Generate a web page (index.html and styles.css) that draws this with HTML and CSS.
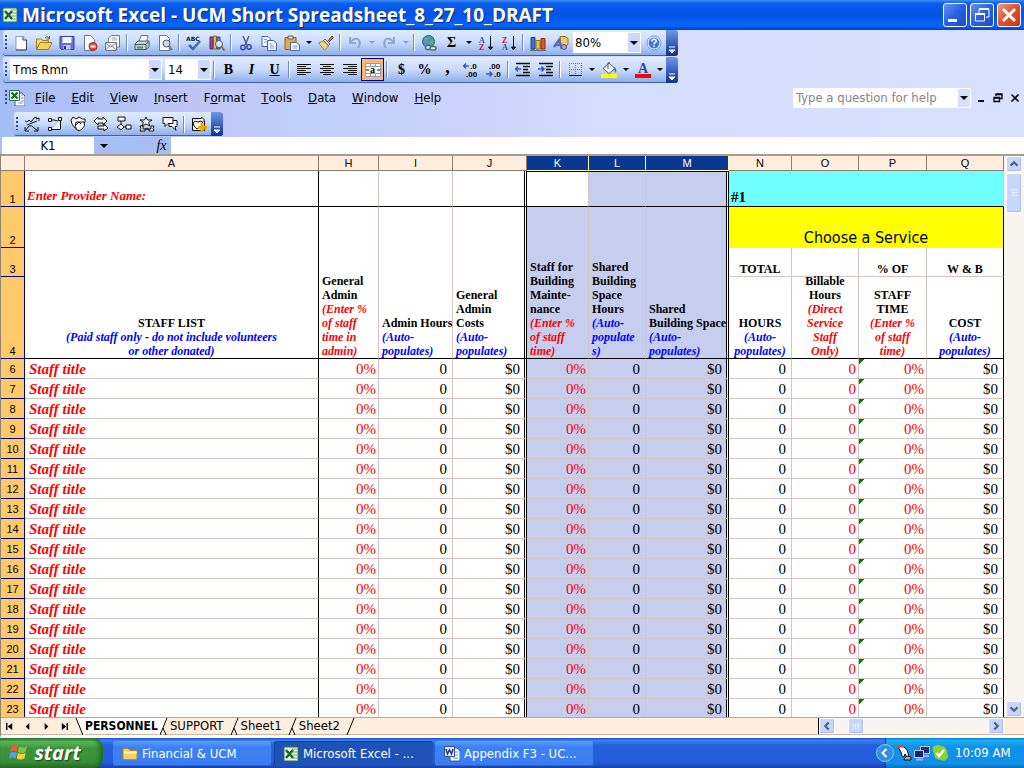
FILE: index.html
```html
<!DOCTYPE html>
<html lang="en">
<head>
<meta charset="utf-8">
<title>Microsoft Excel - UCM Short Spreadsheet_8_27_10_DRAFT</title>
<link rel="stylesheet" href="styles.css">
</head>
<body>
<svg class="defs" aria-hidden="true">
  <symbol id="i-xl" viewBox="0 0 16 16"><path d="M1 1h14v14H1z" fill="#e9f5e4" stroke="#2c7a35"/><path d="M9 3h5M9 6h5M9 9h5M9 12h5" stroke="#76a878"/><path d="M3 4l7 8M10 4l-7 8" stroke="#176b28" stroke-width="2.6"/></symbol>
  <symbol id="i-book" viewBox="0 0 16 16"><path d="M6 3h7l3 3v10H6z" fill="#fff" stroke="#44618f"/><path d="M12 5h3M12 8h3M12 11h3M9 13h5" stroke="#7d95c4"/><path d="M.5.5h10v10H.5z" fill="#e9f5e4" stroke="#2c7a35"/><path d="M2.500 2.500l6 6M8.500 2.500l-6 6" stroke="#176b28" stroke-width="2"/></symbol>
  <symbol id="i-word" viewBox="0 0 16 16"><path d="M6 2h7l3 3v10H6z" fill="#fff" stroke="#3c568c"/><path d="M11 6h3M11 9h3M9 12h5" stroke="#6c86c0"/><path d="M.5.5h10v10H.5z" fill="#e4ecfb" stroke="#2d4f9e"/><path d="M2 3l1.500 5L5.500 4l2 4L9 3" fill="none" stroke="#1c3c94" stroke-width="1.500"/></symbol>
  <symbol id="i-folder" viewBox="0 0 16 16"><path d="M1 3.500q0-1 1-1h4l2 2h6q1 0 1 1V12q0 1.500-1.500 1.500h-11Q1 13.500 1 12z" fill="#f6d063" stroke="#b98b1c"/><path d="M2 6.500h12.500" stroke="#fff3b8" stroke-width="2"/></symbol>
  <symbol id="i-mag" viewBox="0 0 16 16"><path d="M2.500.5h7l3 3v12h-10z" fill="#fff" stroke="#5f77a8"/><circle cx="9.500" cy="8.500" r="3.500" fill="#c7dcf4" stroke="#3b5a86"/><path d="M12 11l3 4" stroke="#a4622a" stroke-width="2"/></symbol>
</svg>

<header class="titlebar">
  <svg class="ic"><use href="#i-xl"/></svg>
  <h1>Microsoft Excel - UCM Short Spreadsheet_8_27_10_DRAFT</h1>
  <div class="win-buttons">
    <button aria-label="Minimize"><svg viewBox="0 0 22 22"><path d="M4 15h9v3H4z" fill="#fff"/></svg></button>
    <button aria-label="Restore"><svg viewBox="0 0 22 22"><path d="M8 9V5.500h10V13h-3" fill="none" stroke="#fff"/><path d="M8 5h10" stroke="#fff" stroke-width="2"/><path d="M4.500 9.500h9V17h-9z" fill="none" stroke="#fff"/><path d="M4 10h10" stroke="#fff" stroke-width="2"/></svg></button>
    <button class="close" aria-label="Close"><svg viewBox="0 0 22 22"><path d="M5 5l12 12M17 5L5 17" stroke="#fff" stroke-width="3"/></svg></button>
  </div>
</header>

<div class="chrome">
  <div class="toolbar" role="toolbar" aria-label="Standard">
    <span class="grip"></span>
    <button aria-label="New"><svg class="ic" viewBox="0 0 16 16"><path d="M3 1.500h7l3.500 3.500v10H3z" fill="#fff" stroke="#8a9cc4"/><path d="M10 1.500V5h3.500M13.500 5v10H3" fill="none" stroke="#33415f"/></svg></button>
    <button aria-label="Open"><svg class="ic" viewBox="0 0 16 16"><path d="M.5 14V4h5l1 1.500h6V8" fill="#f5d77d" stroke="#a37a1e"/><path d="M.5 14.500L4 7.500h12l-3.500 7z" fill="#fbcf5c" stroke="#a37a1e"/><path d="M9 3q2-3 4 0M13.500 1v3h-3" fill="none" stroke="#3a61a8"/></svg></button>
    <button aria-label="Save"><svg class="ic" viewBox="0 0 16 16"><path d="M1 1.500h14v13H2.500L1 13z" fill="#6a6fd0" stroke="#3c429c"/><path d="M3.500 2h9v6h-9z" fill="#f4f7ff"/><path d="M4.500 10h7v4.500h-7z" fill="#c6cce8"/><path d="M6 11v3" stroke="#2b3380" stroke-width="2"/></svg></button>
    <button aria-label="Permission"><svg class="ic" viewBox="0 0 16 16"><path d="M2.500.5h6l4 4v11h-10z" fill="#fff" stroke="#5f77a8"/><circle cx="11" cy="11.500" r="4" fill="#e2502e" stroke="#a32b13"/><path d="M8.500 11.500h5" stroke="#fff" stroke-width="2"/></svg></button>
    <button aria-label="E-mail"><svg class="ic" viewBox="0 0 16 16"><path d="M3.500 8V3l3-2.500h8V12h-3" fill="#fff" stroke="#6f7687"/><path d="M7 3h5M7 5h5" stroke="#9a9fac"/><path d="M.5 7.500h11v8H.5z" fill="#f3f3f5" stroke="#69707f"/><path d="M.5 15l5-5 6 5M.5 8l5 4 6-4" fill="none" stroke="#8a8f9c"/></svg></button>
    <span class="sep"></span>
    <button aria-label="Print"><svg class="ic" viewBox="0 0 16 16"><path d="M5 7l2-6.500h7L12.500 7" fill="#fff" stroke="#65758f"/><path d="M1 9l3-3h11v6l-3 2.500H1z" fill="#c3ccd8" stroke="#4d5b70"/><path d="M1 9.500h11L15 6M12 9.500v5" fill="none" stroke="#4d5b70"/><path d="M3 12.500h6" stroke="#2daa38" stroke-width="2"/></svg></button>
    <button aria-label="Print Preview"><svg class="ic"><use href="#i-mag"/></svg></button>
    <span class="sep"></span>
    <button aria-label="Spelling"><svg class="ic" viewBox="0 0 16 16"><text x="0" y="6" class="abc">ABC</text><path d="M3 10l4 4 7-8" fill="none" stroke="#3769c6" stroke-width="2.500"/></svg></button>
    <button aria-label="Research"><svg class="ic" viewBox="0 0 16 16"><path d="M1 2h3v12H1z" fill="#a23fa5" stroke="#5a2360"/><path d="M4.500 1h3v13h-3z" fill="#e6bf48" stroke="#8b6a18"/><path d="M8 2h3v12H8z" fill="#5a86d3" stroke="#2d4d8b"/><circle cx="10" cy="9" r="3.500" fill="#dcebfa" stroke="#3b5a86"/><path d="M12.500 11.500l3 4" stroke="#a4622a" stroke-width="2"/></svg></button>
    <span class="sep"></span>
    <button aria-label="Cut"><svg class="ic" viewBox="0 0 16 16"><path d="M5 1l4 9M11 1L7 10" stroke="#4c5f86" stroke-width="1.500"/><circle cx="5" cy="12.500" r="2.200" fill="none" stroke="#2a54b4" stroke-width="1.500"/><circle cx="11" cy="12" r="2.200" fill="none" stroke="#2a54b4" stroke-width="1.500"/></svg></button>
    <button aria-label="Copy"><svg class="ic" viewBox="0 0 16 16"><path d="M1 1.500h6l2.500 2.500v7.500H1z" fill="#fff" stroke="#3f65b5"/><path d="M6.500 5.500h6L15.500 8v7.500h-9z" fill="#fff" stroke="#3f65b5"/><path d="M3 4.500h3M3 7h3M8.500 9h3M8.500 11h5M8.500 13h5" stroke="#7696d8"/></svg></button>
    <button aria-label="Paste"><svg class="ic" viewBox="0 0 16 16"><path d="M1 2.500h11v12H1z" fill="#e9a93e" stroke="#946114"/><path d="M4 1h5v3H4z" fill="#d9dde6" stroke="#5b6575"/><path d="M6.500 7.500h6l3 2.500v5.500h-9z" fill="#fff" stroke="#3f65b5"/><path d="M8.500 11h5M8.500 13h5" stroke="#7696d8"/></svg></button>
    <button class="drop" aria-label="Paste options"></button>
    <button aria-label="Format Painter"><svg class="ic" viewBox="0 0 16 16"><path d="M10 6l4-5 1.500 1.500L11 7" fill="#c98544" stroke="#744514"/><path d="M7 4l5 5-1.500 1.500L5.500 5.500z" fill="#d2d8e6" stroke="#5a6680"/><path d="M5.500 6l5 5-4 4-6-7z" fill="#f9d575" stroke="#a8822a"/></svg></button>
    <span class="sep"></span>
    <button aria-label="Undo" disabled><svg class="ic" viewBox="0 0 16 16"><path d="M3 2v6h6M3.500 7.500q3-5 7-3.500t1 9" fill="none" stroke="#93a8d0" stroke-width="2"/></svg></button>
    <button class="drop dim" aria-label="Undo history"></button>
    <button aria-label="Redo" disabled><svg class="ic" viewBox="0 0 16 16"><path d="M13 2v6H7M12.500 7.500q-3-5-7-3.500t-1 9" fill="none" stroke="#93a8d0" stroke-width="2"/></svg></button>
    <button class="drop dim" aria-label="Redo history"></button>
    <span class="sep"></span>
    <button aria-label="Insert Hyperlink"><svg class="ic" viewBox="0 0 16 16"><circle cx="7.500" cy="6.500" r="6" fill="#4b8fe0" stroke="#28598f"/><path d="M3 3q3-2 5 0l-1 3-3 1zM8 7l4-2 1 3-3 3z" fill="#52b84d"/><rect x="4.500" y="10.500" width="6" height="4" rx="2" fill="#e8ecf4" stroke="#56647c" stroke-width="1.500"/><rect x="9" y="11.500" width="6" height="3.500" rx="2" fill="#e8ecf4" stroke="#56647c" stroke-width="1.500"/></svg></button>
    <button class="serif" aria-label="AutoSum">Σ</button>
    <button class="drop" aria-label="AutoSum options"></button>
    <button aria-label="Sort Ascending"><svg class="ic" viewBox="0 0 16 16"><text x="1" y="8" class="sort blue">A</text><text x="1" y="15" class="sort red">Z</text><path d="M12.500 1v13M10.500 12l2 3 2-3z" stroke="#111" fill="#111"/></svg></button>
    <button aria-label="Sort Descending"><svg class="ic" viewBox="0 0 16 16"><text x="1" y="8" class="sort red">Z</text><text x="1" y="15" class="sort blue">A</text><path d="M12.500 1v13M10.500 12l2 3 2-3z" stroke="#111" fill="#111"/></svg></button>
    <span class="sep"></span>
    <button aria-label="Chart Wizard"><svg class="ic" viewBox="0 0 16 16"><path d="M1 2.500h4V14H1z" fill="#3d74d8" stroke="#1c3c86"/><path d="M6 5.500h4V14H6z" fill="#f5c33c" stroke="#97700f"/><path d="M11 3.500h4V14h-4z" fill="#e1582d" stroke="#8c2a10"/><path d="M0 15.500h16" stroke="#5a6680"/></svg></button>
    <button aria-label="Drawing"><svg class="ic" viewBox="0 0 16 16"><path d="M7 1.500h5l3 2v6l-3 2H8z" fill="#f2cc62" stroke="#8f6c1e"/><path d="M1 12L6 5l3 9M3 10h5" fill="none" stroke="#5a6cc2" stroke-width="2.500"/><circle cx="11" cy="12" r="2.500" fill="#b6a1dc" stroke="#614a90"/></svg></button>
    <span class="combo zoom-combo"><select aria-label="Zoom"><option>80%</option></select></span>
    <button aria-label="Help"><svg class="ic" viewBox="0 0 16 16"><circle cx="8" cy="8" r="7" fill="#fff" stroke="#5f8fe0"/><circle cx="8" cy="8" r="5.500" fill="#3b7be0"/><path d="M5.800 6.500q0-2.300 2.200-2.300t2.200 2q0 1-1.200 1.500T8 9.300M8 10.500v1.500" fill="none" stroke="#fff" stroke-width="1.500"/></svg></button>
    <button class="cap" aria-label="Toolbar Options"><svg viewBox="0 0 8 8"><path d="M1 1h6M1 4h6L4 7z" fill="#fff" stroke="#fff"/></svg></button>
  </div>

  <div class="toolbar" role="toolbar" aria-label="Formatting">
    <span class="grip"></span>
    <span class="combo font-combo"><select aria-label="Font"><option>Tms Rmn</option></select></span>
    <span class="combo size-combo"><select aria-label="Font Size"><option>14</option></select></span>
    <span class="sep"></span>
    <button class="serif" aria-label="Bold">B</button>
    <button class="serif italic" aria-label="Italic">I</button>
    <button class="serif under" aria-label="Underline">U</button>
    <span class="sep"></span>
    <button aria-label="Align Left"><svg class="ic" viewBox="0 0 16 16"><path d="M1 2.500h14M1 4.500h9M1 6.500h14M1 8.500h9M1 10.500h14M1 12.500h9" stroke="#111"/></svg></button>
    <button aria-label="Center"><svg class="ic" viewBox="0 0 16 16"><path d="M1 2.500h14M4 4.500h8M1 6.500h14M4 8.500h8M1 10.500h14M4 12.500h8" stroke="#111"/></svg></button>
    <button aria-label="Align Right"><svg class="ic" viewBox="0 0 16 16"><path d="M1 2.500h14M6 4.500h9M1 6.500h14M6 8.500h9M1 10.500h14M6 12.500h9" stroke="#111"/></svg></button>
    <button class="pressed" aria-label="Merge and Center"><svg class="ic" viewBox="0 0 16 16"><path d="M.5 1.500h15v13H.5zM.5 4.500h15M.5 11.500h15M5.500 1.500v3M10.500 1.500v3M5.500 11.500v3M10.500 11.500v3" fill="#fff" stroke="#8b9cc4"/><text x="5" y="11" class="merge-a">a</text><path d="M1 8h3M12 8h3" stroke="#111"/></svg></button>
    <span class="sep"></span>
    <button class="serif" aria-label="Currency Style">$</button>
    <button class="serif" aria-label="Percent Style">%</button>
    <button class="serif comma" aria-label="Comma Style">,</button>
    <button aria-label="Increase Decimal"><svg class="ic" viewBox="0 0 16 16"><path d="M0 4h6M3 1.500L.5 4 3 6.500" stroke="#2a5bc4" stroke-width="1.500" fill="none"/><text x="7" y="7" class="dec">.0</text><text x="3" y="15" class="dec">.00</text></svg></button>
    <button aria-label="Decrease Decimal"><svg class="ic" viewBox="0 0 16 16"><text x="3" y="7" class="dec">.00</text><text x="8" y="15" class="dec">.0</text><path d="M0 12h6M3.500 9.500L6 12l-2.500 2.500" stroke="#2a5bc4" stroke-width="1.500" fill="none"/></svg></button>
    <span class="sep"></span>
    <button aria-label="Decrease Indent"><svg class="ic" viewBox="0 0 16 16"><path d="M1 1.500h14M8 4.500h7M8 7.500h5M8 10.500h7M1 13.500h14" stroke="#111" stroke-width="1.400"/><path d="M0 7h6M3 4.500L.5 7 3 9.500" stroke="#2a5bc4" stroke-width="1.500" fill="none"/></svg></button>
    <button aria-label="Increase Indent"><svg class="ic" viewBox="0 0 16 16"><path d="M1 1.500h14M8 4.500h7M8 7.500h5M8 10.500h7M1 13.500h14" stroke="#111" stroke-width="1.400"/><path d="M0 7h6M3.500 4.500L6 7 3.500 9.500" stroke="#2a5bc4" stroke-width="1.500" fill="none"/></svg></button>
    <span class="sep"></span>
    <button aria-label="Borders"><svg class="ic" viewBox="0 0 16 16"><path d="M2 1.500h13M2 7.500h13M2.500 1v12M8.500 1v12M14.500 1v12" stroke="#66799f" stroke-dasharray="1 1"/><path d="M2 13.500h13" stroke="#111"/></svg></button>
    <button class="drop" aria-label="Border options"></button>
    <button aria-label="Fill Color"><svg class="ic" viewBox="0 0 16 16"><path d="M2 6.500L8 1l6 5.500-6 5z" fill="#eef2f9" stroke="#4c5e80"/><path d="M7 7V1q0-1.500 2 0" fill="none" stroke="#4c5e80"/><path d="M13 5q3 1 2 6l-2-3z" fill="#3c68c2"/><path d="M0 12h16v4H0z" fill="#ff0"/></svg></button>
    <button class="drop" aria-label="Fill Color options"></button>
    <button aria-label="Font Color"><svg class="ic" viewBox="0 0 16 16"><text x="3" y="11" class="font-a">A</text><path d="M0 12h16v4H0z" fill="red"/></svg></button>
    <button class="drop" aria-label="Font Color options"></button>
    <button class="cap" aria-label="Toolbar Options"><svg viewBox="0 0 8 8"><path d="M1 1h6M1 4h6L4 7z" fill="#fff" stroke="#fff"/></svg></button>
  </div>

  <nav class="menubar" aria-label="Menu">
    <span class="grip"></span>
    <svg class="ic"><use href="#i-book"/></svg>
    <div class="menus">
      <button><u>F</u>ile</button><button><u>E</u>dit</button><button><u>V</u>iew</button><button><u>I</u>nsert</button><button>F<u>o</u>rmat</button><button><u>T</u>ools</button><button><u>D</u>ata</button><button><u>W</u>indow</button><button><u>H</u>elp</button>
    </div>
    <span class="combo ask"><input type="text" aria-label="Type a question for help" placeholder="Type a question for help"></span>
    <div class="doc-buttons">
      <button aria-label="Minimize Window"><svg viewBox="0 0 10 10"><path d="M2 8h6" stroke="#000" stroke-width="2"/></svg></button>
      <button aria-label="Restore Window"><svg viewBox="0 0 10 10"><path d="M3 3V1h6v4.500H7M3 1.500h6M1 4.500h5.500v4H1zM1 5h6" fill="none" stroke="#000" stroke-width="1.300"/></svg></button>
      <button aria-label="Close Window"><svg viewBox="0 0 10 10"><path d="M1.500 1.500l7 7M8.500 1.500l-7 7" stroke="#000" stroke-width="1.600"/></svg></button>
    </div>
  </nav>

  <div class="toolbar flow" role="toolbar" aria-label="AutoShapes">
    <span class="grip"></span>
    <button aria-label="Lines"><svg class="ic line" viewBox="0 0 16 16"><path fill="none" d="M1 5l2 1 2-2 2 2 3-4 3-1M12 3l3-1v3M3 9l10-4M1 11v4h4M1 15l4-5q3-1 4 1l5 4M14 11v4h-4"/></svg></button>
    <button aria-label="Connectors"><svg class="ic line" viewBox="0 0 16 16"><path d="M1.500 2.500h3v3h-3zM11.500 1.500h3v3h-3zM1.500 11.500h3v3h-3zM5 4h2l4 1M13.500 5v8.500H5"/></svg></button>
    <button aria-label="Basic Shapes"><svg class="ic line" viewBox="0 0 16 16"><path d="M1 4l2-3 3 2 3-2 3 2h3v3l-3 4-4 4-3-2-3-4z"/><path d="M6 6h8q2 4-2 7-3 3-5 1-3-3-1-8zM6 9l3-3 2 2"/></svg></button>
    <button aria-label="Block Arrows"><svg class="ic line" viewBox="0 0 16 16"><path d="M1 5l4-4v2h5V1l4 4-4 4V7H5v2zM5 10h6V8l4 4-4 3v-2H5z"/></svg></button>
    <button aria-label="Flowchart"><svg class="ic line" viewBox="0 0 16 16"><path d="M2 1h7v4H2zM5 5v3M5 8l3 3-3 3-4-3zM8 11h2M10 9h5v4h-5z"/></svg></button>
    <button aria-label="Stars and Banners"><svg class="ic line" viewBox="0 0 16 16"><path d="M7 1l1.500 3H13L9.500 6.500 11 10 7 8l-4 2 1.500-3.500L1 4h4.500zM1 10h3v3h8v-3h3l-1 2.500 1 2.500h-5v-2H6v2H1l1-2.500z"/></svg></button>
    <button aria-label="Callouts"><svg class="ic line" viewBox="0 0 16 16"><path d="M7 4.500h8v6h-2l1 4-4-4H7z"/><path d="M1 1.500h10v6H6l-3 3v-3H1z"/></svg></button>
    <span class="sep"></span>
    <button aria-label="More AutoShapes"><svg class="ic line" viewBox="0 0 16 16"><path d="M1.500 2.500h9V1l3 3-3 3V5.500M1.500 2.500v12h12V5"/><path d="M2 7l2-2 3 1 3-1 2 2-3 5-3 1-3-3z"/><path d="M11 7v9M7 11.500h9" class="gold"/></svg></button>
    <button class="cap" aria-label="Toolbar Options"><svg viewBox="0 0 8 8"><path d="M1 1h6M1 4h6L4 7z" fill="#fff" stroke="#fff"/></svg></button>
  </div>
</div>

<div class="formula-bar">
  <input class="name-box" type="text" aria-label="Name Box" value="K1">
  <button class="drop" aria-label="Name list"></button>
  <button class="fx" aria-label="Insert Function">fx</button>
  <input class="formula" type="text" aria-label="Formula Bar">
</div>

<main class="workbook">
  <div class="sheet">
    <table class="grid">
      <colgroup><col class="c-head"><col><col class="c-h"><col class="c-i"><col class="c-i"><col class="c-k"><col class="c-l"><col class="c-m"><col class="c-n"><col class="c-o"><col class="c-p"><col class="c-q"></colgroup>
      <thead>
        <tr><th></th><th>A</th><th>H</th><th>I</th><th>J</th><th class="on">K</th><th class="on">L</th><th class="on">M</th><th>N</th><th>O</th><th>P</th><th>Q</th></tr>
      </thead>
      <tbody id="rows">
        <tr class="r1"><th>1</th><td class="provider edge">Enter Provider Name:</td><td></td><td></td><td class="dbl"></td><td class="active"></td><td class="sel"></td><td class="sel dbl"></td><td class="service-no" colspan="4">#1</td></tr>
        <tr class="r2"><th>2</th>
          <td rowspan="3" class="edge mid">STAFF LIST<br><i class="blue">(Paid staff only - do not include volunteers<br>or other donated)</i></td>
          <td rowspan="3">General<br>Admin<br><i class="red">(Enter %<br>of staff<br>time in<br>admin)</i></td>
          <td rowspan="3">Admin Hours<br><i class="blue">(Auto-<br>populates)</i></td>
          <td rowspan="3" class="dbl">General<br>Admin<br>Costs<br><i class="blue">(Auto-<br>populates)</i></td>
          <td rowspan="3" class="sel">Staff for<br>Building<br>Mainte-<br>nance<br><i class="red">(Enter %<br>of staff<br>time)</i></td>
          <td rowspan="3" class="sel">Shared<br>Building<br>Space<br>Hours<br><i class="blue">(Auto-<br>populate<br>s)</i></td>
          <td rowspan="3" class="sel dbl">Shared<br>Building Space<br><i class="blue">(Auto-<br>populates)</i></td>
          <td colspan="4" class="choose">Choose a Service</td></tr>
        <tr class="r3"><th>3</th><td class="mid">TOTAL</td><td></td><td class="mid">% OF</td><td class="mid last">W &amp; B</td></tr>
        <tr class="r4"><th>4</th>
          <td class="mid">HOURS<br><i class="blue">(Auto-<br>populates)</i></td>
          <td class="mid"><div class="spill">Billable<br>Hours<br><i class="red">(Direct<br>Service<br>Staff<br>Only)</i></div></td>
          <td class="mid">STAFF<br>TIME<br><i class="red">(Enter %<br>of staff<br>time)</i></td>
          <td class="mid last">COST<br><i class="blue">(Auto-<br>populates)</i></td></tr>
      </tbody>
    </table>
    <div class="scroll vertical" aria-hidden="true">
      <span class="sb"><svg viewBox="0 0 16 16"><path d="M4 10l4-4 4 4"/></svg></span>
      <span class="sb thumb-v"><svg viewBox="0 0 16 16"><path d="M5 4.500h7M5 7.500h7M5 10.500h7" class="thin"/></svg></span>
      <span class="sb end"><svg viewBox="0 0 16 16"><path d="M4 6l4 4 4-4"/></svg></span>
    </div>
  </div>
  <div class="tabs">
    <div class="tab-nav">
      <button aria-label="First sheet"><svg viewBox="0 0 10 10"><path d="M2 1v8" stroke="#000" stroke-width="1.500"/><path d="M8 1v8L3 5z"/></svg></button>
      <button aria-label="Previous sheet"><svg viewBox="0 0 10 10"><path d="M7 1v8L3 5z"/></svg></button>
      <button aria-label="Next sheet"><svg viewBox="0 0 10 10"><path d="M3 1v8l4-4z"/></svg></button>
      <button aria-label="Last sheet"><svg viewBox="0 0 10 10"><path d="M8 1v8" stroke="#000" stroke-width="1.500"/><path d="M2 1v8l5-4z"/></svg></button>
    </div>
    <svg class="slant" viewBox="0 0 10 17"><path d="M1 0l7 17h2V0z" fill="#fff"/><path d="M1 0l7 17" stroke="#000"/></svg>
    <button class="tab current">PERSONNEL</button>
    <svg class="slant" viewBox="0 0 10 17"><path d="M0 0h9L2 17H0z" fill="#fff"/><path d="M9 0L2 17M5 10l3 7" stroke="#000"/></svg>
    <button class="tab">SUPPORT</button>
    <svg class="slant" viewBox="0 0 10 17"><path d="M9 0L2 17M5 10l3 7" stroke="#000"/></svg>
    <button class="tab">Sheet1</button>
    <svg class="slant" viewBox="0 0 10 17"><path d="M9 0L2 17M5 10l3 7" stroke="#000"/></svg>
    <button class="tab">Sheet2</button>
    <svg class="slant" viewBox="0 0 10 17"><path d="M9 0L2 17" stroke="#000"/></svg>
    <div class="scroll horizontal" aria-hidden="true">
      <span class="sb"><svg viewBox="0 0 16 16"><path d="M10 4L6 8l4 4"/></svg></span>
      <span class="sb thumb-h"><svg viewBox="0 0 16 16"><path d="M4.500 5v7M7.500 5v7M10.500 5v7" class="thin"/></svg></span>
      <span class="sb end"><svg viewBox="0 0 16 16"><path d="M6 4l4 4-4 4"/></svg></span>
    </div>
  </div>
</main>

<footer class="taskbar">
  <button class="start"><svg viewBox="0 0 20 20"><path d="M3 4q3-2 6 0L8 9q-3-2-6 0z" fill="#f0592b"/><path d="M10 4q3 2 7 0l-1 5q-4 2-7 0z" fill="#7fc742"/><path d="M2 10q3-2 6 0l-1 5q-3-2-6 0z" fill="#5a9cf5"/><path d="M9 10q3 2 7 0l-1 5q-4 2-7 0z" fill="#fbcd3b"/></svg>start</button>
  <div class="tasks">
    <button><svg class="ic"><use href="#i-folder"/></svg>Financial &amp; UCM</button>
    <button class="down"><svg class="ic"><use href="#i-xl"/></svg>Microsoft Excel - ...</button>
    <button><svg class="ic"><use href="#i-word"/></svg>Appendix F3 - UC...</button>
  </div>
  <div class="tray">
    <button class="expand" aria-label="Show hidden icons"><svg viewBox="0 0 18 18"><circle cx="9" cy="9" r="8.500" fill="#2f8fe8" stroke="#8cc8fa"/><path d="M10.500 5L6.500 9l4 4" fill="none" stroke="#fff" stroke-width="2"/></svg></button>
    <svg class="ic" viewBox="0 0 16 16"><path d="M2 2l5-1 4 4 2 6-2 1-2-3-1 3-2-1-1-4z" fill="#fff" stroke="#111"/><path d="M1 2.500L6 1l2 1" stroke="#e33" stroke-width="2" fill="none"/><path d="M8 14l3-3 4 1v3H8z" fill="#aab" stroke="#111"/></svg>
    <svg class="ic" viewBox="0 0 16 16"><path d="M6.500 1.500h9v7h-9z" fill="#26306f" stroke="#b9c2e6"/><path d="M.5 5.500h9v7h-9z" fill="#1b2560" stroke="#c5cdee"/><path d="M2 14.500h7M10 11h5" stroke="#b1a6d8" stroke-width="2"/></svg>
    <svg class="ic" viewBox="0 0 16 16"><path d="M5 0q3 0 4 1 6 0 6 7 2 3 0 6-3 3-6 1-6 0-7-6Q0 5 1 2 3 0 5 0z" fill="#8fd02e"/><path d="M4.500 8l2.500 3 5-6" fill="none" stroke="#fff" stroke-width="2.500"/></svg>
    <time>10:09 AM</time>
  </div>
</footer>
<script src="rows.js"></script>
</body>
</html>
```

FILE: rows.js
```js
const body = document.getElementById('rows');
const columns = [
  ['Staff title', 'title edge'], ['0%', 'red'], ['0', ''], ['$0', 'dbl'],
  ['0%', 'red sel'], ['0', 'sel'], ['$0', 'sel dbl'],
  ['0', ''], ['0', 'red'], ['0%', 'red flag'], ['$0', 'last']
];
for (let n = 6; n <= 23; n++) {
  const row = body.insertRow();
  row.className = 'data';
  const head = document.createElement('th');
  head.textContent = n;
  row.append(head);
  for (const [text, cls] of columns) {
    const cell = row.insertCell();
    cell.textContent = text;
    cell.className = cls;
  }
}
```

FILE: styles.css
```css
* { box-sizing: border-box; }
body { margin: 0; height: 100vh; display: flex; flex-direction: column; overflow: hidden; background: #fff; color: #000; font: 13px/16px "DejaVu Sans Condensed", "DejaVu Sans", sans-serif; }
button, input, select { font: inherit; color: inherit; margin: 0; padding: 0; border: 0; background: none; border-radius: 0; }
button { display: flex; align-items: center; justify-content: center; flex: none; }
svg { flex: none; }
.defs { display: none; }
.ic { width: 16px; height: 16px; }
.red { color: #f00; fill: #b3262a; }
.blue { color: #00f; fill: #2c4fa5; }

.titlebar { display: flex; align-items: center; gap: 4px; height: 30px; flex: none; padding: 0 3px 0 2px; background: linear-gradient(#3c8cf5, #0a5ceb 12%, #0452e4 50%, #0566fb 85%, #0441c8); color: #fff; }
.titlebar h1 { flex: 1; margin: 0; font: bold 19px/26px "Open Sans", sans-serif; text-shadow: 1px 1px #0a2a86; white-space: nowrap; }
.win-buttons { display: flex; gap: 3px; }
.win-buttons button { width: 24px; height: 24px; border: 1px solid #fff; border-radius: 3px; background: linear-gradient(135deg, #6b94f0, #2a5fe0 50%, #1d4bc8); }
.win-buttons .close { background: linear-gradient(135deg, #f09a80, #e2502a 50%, #c8360f); }
.win-buttons svg { width: 22px; height: 22px; }

.chrome { flex: none; background: linear-gradient(90deg, #a5bdf6, #b2c3f5 10%, #c0c6f5 20%, #bfcffb 30%, #cbd3fc 45%, #d5defe 60%, #d7e0ff); }
.toolbar { display: flex; align-items: stretch; width: max-content; height: 26px; margin: 0 0 1px 3px; padding-left: 2px; border-bottom: 1px solid #3e60a8; border-radius: 3px; background: linear-gradient(#e0ebff, #c9dbfb 50%, #8fafea); }
.toolbar button { width: 23px; }
.toolbar .drop { width: 11px; }
.drop::after { content: ""; flex: none; border: 3px solid transparent; border-top-color: #000; border-bottom: 0; }
.drop.dim::after { border-top-color: #8d9dbd; }
.grip { width: 4px; flex: none; margin: 5px 0; background: repeating-linear-gradient(#2d4a94 0 2px, transparent 2px 4px) 0 0 / 2px 100% no-repeat; }
.sep { width: 6px; flex: none; background: linear-gradient(90deg, #6a8ccb 1px, #fff 1px) 2px 4px / 2px 17px no-repeat; }
.toolbar .cap { width: 12px; margin: 0 0 -1px 1px; border-radius: 0 3px 3px 0; background: linear-gradient(#6f97e6, #0b3290); align-items: flex-end; padding-bottom: 2px; }
.cap svg { width: 8px; height: 8px; }
.toolbar .serif { font: bold 14px/16px "Liberation Serif", serif; }
.toolbar .italic { font-style: italic; }
.toolbar .under { text-decoration: underline; }
.toolbar .comma { font-size: 18px; padding-bottom: 6px; }
.toolbar .pressed { border: 1px solid #000080; background: #ffb868; margin: 1px 0; }
.abc { font: bold 6px "DejaVu Sans", sans-serif; fill: #223; }
.sort { font: bold 8px "Liberation Serif", serif; }
.merge-a { font: bold 10px "Liberation Serif", serif; }
.dec { font: bold 8px "Liberation Sans", sans-serif; }
.font-a { font: bold 14px "Liberation Serif", serif; fill: #2b4a9e; }
.combo { display: flex; position: relative; margin: 2px 1px 2px 2px; background: #fff; border: 1px solid #fff; }
.combo select, .combo input { appearance: none; width: 100%; padding: 0 14px 0 2px; outline: 0; }
.combo::before { content: ""; position: absolute; right: 0; top: 0; bottom: 0; width: 12px; background: #cbdafb; pointer-events: none; }
.combo::after { content: ""; position: absolute; right: 2px; top: 50%; margin-top: -2px; border: 4px solid transparent; border-top-color: #000; border-bottom: 0; pointer-events: none; }
.zoom-combo { width: 68px; margin-left: 1px; }
.toolbar .zoom-combo select { padding-left: 1px; }
.font-combo { width: 152px; margin-left: 1px; }
.size-combo { width: 46px; margin-right: 0; }

.menubar { display: flex; align-items: center; height: 28px; padding: 0 4px 0 5px; }
.menubar .grip { height: 16px; }
.menus { display: flex; gap: 16px; margin-left: 10px; }
.ask { width: 178px; height: 20px; margin: 0 5px 0 auto; }
.ask input::placeholder { color: #858585; opacity: 1; }
.ask::before { background: #d7e0ff; }
.doc-buttons { display: flex; gap: 7px; }
.doc-buttons svg { width: 10px; height: 10px; display: block; }
.flow { height: 24px; margin: 0 0 1px 14px; }
.flow .ic { fill: #fff; stroke: #111; }
.flow .line .gold { stroke: #e8a800; stroke-width: 3; }

.formula-bar { display: flex; height: 17px; flex: none; background: #a6bdf6; padding-left: 2px; }
.name-box { width: 92px; background: #fff; text-align: center; }
.formula-bar .drop { width: 20px; }
.formula-bar .drop::after { border-width: 4px 4px 0; }
.fx { margin-left: 38px; width: 19px; font: italic 14px/16px "Liberation Serif", serif; }
.formula { flex: 1; background: #fff; outline: 0; }

.workbook { flex: 1; min-height: 0; display: flex; flex-direction: column; border-top: 2px solid #a89c8c; border-left: 1px solid #8f8474; border-bottom: 3px solid #fff; }
.sheet { flex: 1; min-height: 0; display: flex; overflow: hidden; }
.grid { flex: 1; align-self: flex-start; table-layout: fixed; border-collapse: separate; border-spacing: 0; width: 100%; }
.c-head { width: 24px; } .c-h { width: 60px; } .c-i { width: 74px; } .c-k { width: 62px; } .c-l { width: 57px; } .c-m { width: 83px; } .c-n { width: 63px; } .c-o { width: 67px; } .c-p { width: 68px; } .c-q { width: 77px; }
.grid th { font: 11px/14px "Liberation Sans", sans-serif; padding: 0; }
.grid thead th { height: 15px; background: #ffeedd; border-right: 1px solid #8a7f70; border-bottom: 1px solid #8a7f70; }
.grid thead .on { background: #0a3791; color: #fff; border-color: #ffffa0; }
.grid tbody th { background: #ffc869; border-right: 1px solid #00007c; border-bottom: 1px solid #00007c; vertical-align: bottom; }
.grid td { padding: 0 3px; vertical-align: bottom; white-space: nowrap; font: bold 12px/14px "Liberation Serif", serif; border-right: 1px solid #d2c5c2; border-bottom: 1px solid #000; }
.grid .edge { border-right-color: #000; }
.grid .mid { text-align: center; padding: 0; }
.grid .sel { background: #c6cef0; }
.grid .dbl { border-right: 3px double #000; background-clip: padding-box; }
.grid .last { border-right-color: #000; }
.r1 > * { height: 36px; }
.grid .r1 .provider { font-style: italic; font-size: 13px; color: #f00; padding: 0 2px 3px; }
.r1 .active, .r1 .sel { border-top: 1px solid #000; }
.grid .service-no { background: #70ffff; font-size: 15px; padding: 0 2px 2px; }
.r2 > th { height: 41px; }
.grid .choose { background: #ff0; border-bottom: 0; border-right-color: #000; text-align: center; font: 16px/20px "DejaVu Sans Condensed", sans-serif; }
.r3 > * { height: 29px; }
.grid .r3 td { border-bottom-color: #d2c5c2; }
.r4 > * { height: 82px; }
.spill { height: 81px; display: flex; flex-direction: column; justify-content: flex-end; line-height: 14px; }
.grid .data > * { height: 20px; }
.grid .data th { vertical-align: middle; }
.grid .data td { font: 15px/18px "Liberation Sans Narrow", "Liberation Serif", serif; text-align: right; padding: 0 5px 0 0; border-bottom-color: #d2c5c2; }
.grid .data .dbl { padding-right: 4px; }
.grid .data .title { font: italic bold 15px/18px "Liberation Serif", serif; text-align: left; color: #f00; padding-left: 4px; }
.grid .data .red { padding-right: 2px; }
.grid .flag { background: linear-gradient(135deg, #008000 4px, transparent 4px) 0 0 / 6px 6px no-repeat; }

.scroll { display: flex; background: #f8f5f0; }
.sb { display: flex; align-items: center; justify-content: center; width: 16px; height: 16px; flex: none; border: 1px solid #fff; border-radius: 2px; background: #c9d6fc; box-shadow: inset -1px -1px #a9bcf2; }
.sb svg { width: 14px; height: 14px; fill: none; stroke: #4d6185; stroke-width: 2.500; }
.sb .thin { stroke: #f5f8ff; stroke-width: 1; }
.vertical { flex-direction: column; align-items: center; width: 20px; flex: none; }
.thumb-v { height: 40px; margin-top: 1px; }
.vertical .end { margin-top: auto; }
.tabs { display: flex; flex: none; height: 18px; background: #ffeedd; border-top: 1px solid #b8a896; border-bottom: 1px solid #c8b8a8; padding-right: 20px; }
.tab-nav { display: flex; align-items: center; width: 74px; justify-content: space-between; padding: 0 6px 0 4px; }
.tab-nav svg { width: 9px; height: 9px; }
.slant { width: 10px; height: 17px; fill: none; }
.tab { padding: 0 5px 0 2px; line-height: 16px; }
.current { padding: 0; background: #fff; font-weight: bold; font-size: 12px; }
.horizontal { width: 186px; margin-left: auto; border-left: 1px solid #000; }
.thumb-h { margin-left: 13px; }
.horizontal .end { margin-left: auto; }

.taskbar { display: flex; flex: none; height: 30px; background: linear-gradient(#1d4fc4, #3a80f2 8%, #265edb 25%, #245ddb 80%, #1941a5); color: #fff; }
.start { width: 103px; gap: 4px; padding-right: 14px; border-radius: 0 10px 10px 0; background: linear-gradient(#2c7a2c, #5fb75c 12%, #3c953b 35%, #388f38 80%, #276b27); box-shadow: inset -3px 0 4px #1f6a20; font: italic bold 20px/24px "Open Sans", sans-serif; text-shadow: 1px 1px 2px #123f12; }
.start svg { width: 22px; height: 22px; }
.tasks { display: flex; gap: 2px; flex: 1; padding: 3px 0 2px 10px; }
.tasks button { width: 159px; justify-content: flex-start; gap: 4px; padding-left: 9px; border-radius: 3px; background: linear-gradient(#5a9dff, #3c81f3 25%, #3b7df0); box-shadow: inset -1px -1px #2a62d0; white-space: nowrap; }
.tasks .down { background: #1e52b7; box-shadow: inset 1px 1px #163f93; }
.tray { display: flex; align-items: center; gap: 2px; width: 139px; background: linear-gradient(#0d7ad0, #18b0f5 8%, #1290e8 30%, #1190e8 85%, #0d6cb8); border-left: 1px solid #0b3f98; }
.expand { margin-left: -10px; }
.expand svg { width: 18px; height: 18px; }
.tray time { margin-left: 5px; white-space: nowrap; }
```
